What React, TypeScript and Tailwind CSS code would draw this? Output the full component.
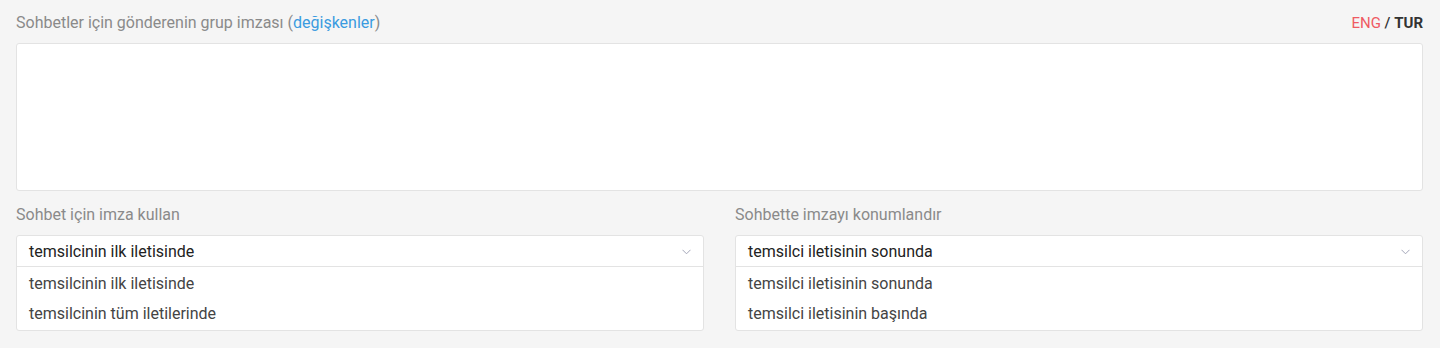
import React from "react";

function Chevron() {
  return (
    <svg width="9" height="6" viewBox="0 0 9 6" fill="none" className="shrink-0">
      <path d="M0.5 0.8 L4.5 4.8 L8.5 0.8" stroke="#a3a6b8" strokeWidth="1" />
    </svg>
  );
}

function Select({ value, options }: { value: string; options: string[] }) {
  return (
    <div className="rounded-[3px] border border-[#e3e3e3] bg-white">
      <div className="flex h-[31px] items-center justify-between border-b border-[#e3e3e3] pl-[12px] pr-[12px] pt-[2px] text-[16px] text-[#222]">
        <span>{value}</span>
        <Chevron />
      </div>
      <div className="flex flex-col pb-[1px] pt-[2px]">
        {options.map((o) => (
          <div key={o} className="flex h-[30px] items-center pl-[12px] text-[16px] text-[#444]">
            {o}
          </div>
        ))}
      </div>
    </div>
  );
}

export default function App() {
  return (
    <div
      className="h-[348px] w-[1440px] bg-[#f5f5f5] pl-[16px] pr-[17px] pt-[13px]"
      style={{ fontFamily: "Roboto, 'Noto Sans', sans-serif" }}
    >
      <div className="flex items-center justify-between text-[16px] leading-[20px]">
        <div className="text-[#8a8a8a]">
          Sohbetler için gönderenin grup imzası (
          <span className="text-[#3a9be0]">değişkenler</span>)
        </div>
        <div className="text-[15px]">
          <span className="text-[#ef5a63]">ENG</span>
          <span className="font-medium text-[#333]"> / </span>
          <span className="font-bold text-[#333]">TUR</span>
        </div>
      </div>
      <div className="mt-[10px] h-[148px] rounded-[3px] border border-[#e3e3e3] bg-white" />
      <div className="mt-[14px] grid grid-cols-2 gap-[31px]">
        <div className="flex flex-col">
          <div className="text-[16px] leading-[20px] text-[#8a8a8a]">Sohbet için imza kullan</div>
          <div className="mt-[10px]">
            <Select
              value="temsilcinin ilk iletisinde"
              options={["temsilcinin ilk iletisinde", "temsilcinin tüm iletilerinde"]}
            />
          </div>
        </div>
        <div className="flex flex-col">
          <div className="text-[16px] leading-[20px] text-[#8a8a8a]">Sohbette imzayı konumlandır</div>
          <div className="mt-[10px]">
            <Select
              value="temsilci iletisinin sonunda"
              options={["temsilci iletisinin sonunda", "temsilci iletisinin başında"]}
            />
          </div>
        </div>
      </div>
    </div>
  );
}
